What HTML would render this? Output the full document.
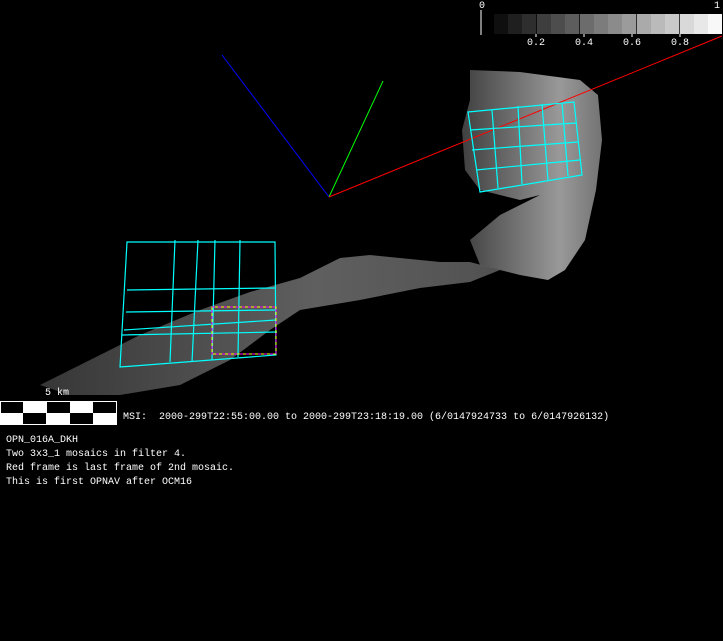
<!DOCTYPE html><html><head><style>
body{margin:0;background:#000;width:723px;height:641px;overflow:hidden;position:relative;font-family:"Liberation Mono",monospace;color:#fff;font-size:10px}
.t{position:absolute;white-space:pre;line-height:14px}
</style></head><body>
<svg width="723" height="641" style="position:absolute;left:0;top:0">
<defs><linearGradient id="g" x1="0" x2="1"><stop offset="0" stop-color="#444"/><stop offset=".6" stop-color="#777"/><stop offset="1" stop-color="#666"/></linearGradient>
<linearGradient id="g2" x1="0" x2="1"><stop offset="0" stop-color="#555"/><stop offset=".7" stop-color="#ccc"/><stop offset="1" stop-color="#999"/></linearGradient></defs>
<g>
<rect x="494" y="14" width="14.3" height="20" fill="#0f0f0f"/><rect x="508" y="14" width="14.3" height="20" fill="#1f1f1f"/><rect x="522" y="14" width="14.3" height="20" fill="#2e2e2e"/><rect x="537" y="14" width="14.3" height="20" fill="#3e3e3e"/><rect x="551" y="14" width="14.3" height="20" fill="#4d4d4d"/><rect x="565" y="14" width="14.3" height="20" fill="#5d5d5d"/><rect x="580" y="14" width="14.3" height="20" fill="#6c6c6c"/><rect x="594" y="14" width="14.3" height="20" fill="#7c7c7c"/><rect x="608" y="14" width="14.3" height="20" fill="#8b8b8b"/><rect x="622" y="14" width="14.3" height="20" fill="#9b9b9b"/><rect x="637" y="14" width="14.3" height="20" fill="#aaa"/><rect x="651" y="14" width="14.3" height="20" fill="#bababa"/><rect x="665" y="14" width="14.3" height="20" fill="#c9c9c9"/><rect x="680" y="14" width="14.3" height="20" fill="#d9d9d9"/><rect x="694" y="14" width="14.3" height="20" fill="#e8e8e8"/><rect x="708" y="14" width="14" height="20" fill="#f8f8f8"/>
<line x1="481" y1="10" x2="481" y2="35" stroke="#fff"/>
<line x1="536" y1="34" x2="536" y2="37" stroke="#fff"/><line x1="584" y1="34" x2="584" y2="37" stroke="#fff"/><line x1="632" y1="34" x2="632" y2="37" stroke="#fff"/><line x1="680" y1="34" x2="680" y2="37" stroke="#fff"/>
</g>
<path d="M470 70 L520 72 L580 80 L598 95 L602 140 L596 190 L585 240 L565 270 L548 280 L520 275 L480 265 L470 240 L500 215 L540 195 L520 200 L480 190 L465 170 L462 130 L470 100 Z" fill="url(#g2)" opacity=".75"/>
<path d="M40 385 L100 355 L140 335 L200 310 L250 292 L300 278 L340 258 L370 255 L400 258 L440 262 L470 262 L500 270 L470 282 L420 288 L360 300 L300 310 L270 330 L230 360 L180 385 L120 395 L70 395 Z" fill="url(#g)" opacity=".8"/>
<line x1="329" y1="197" x2="222" y2="55" stroke="#00f"/>
<line x1="329" y1="197" x2="383" y2="81" stroke="#0f0"/>
<line x1="329" y1="197" x2="722" y2="36" stroke="#f00"/>
<g stroke="#0ff" fill="none" stroke-width="1.2">
<path d="M127 242 L275 242 L276 355 L120 367 Z"/>
<path d="M127 290 L275 288 M126 312 L276 310 M124 330 L276 320 M122 335 L277 332"/>
<path d="M175 240 L170 362 M198 240 L192 362 M215 240 L212 360 M240 240 L238 357"/>
<path d="M468 112 L574 102 L582 175 L480 192 Z"/>
<path d="M470 130 L576 123 M472 150 L578 142 M476 170 L580 160"/>
<path d="M492 110 L498 188 M518 106 L522 184 M542 104 L548 180 M562 103 L568 176"/>
</g>
<rect x="212" y="307" width="64" height="47" fill="none" stroke="#ff0"/>
<rect x="212" y="307" width="64" height="47" fill="none" stroke="#f0f" stroke-dasharray="3 3"/>
<rect x="0.5" y="401.5" width="116" height="23" fill="#fff" stroke="#fff"/>
<rect x="1" y="402" width="22" height="11" fill="#000"/><rect x="47" y="402" width="23" height="11" fill="#000"/><rect x="93" y="402" width="23" height="11" fill="#000"/>
<rect x="23" y="413" width="23" height="11" fill="#000"/><rect x="70" y="413" width="23" height="11" fill="#000"/>
</svg>
<div class="t" style="left:479px;top:0px">0</div>
<div class="t" style="left:714px;top:0px">1</div>
<div class="t" style="left:527px;top:37px">0.2</div>
<div class="t" style="left:575px;top:37px">0.4</div>
<div class="t" style="left:623px;top:37px">0.6</div>
<div class="t" style="left:671px;top:37px">0.8</div>
<div class="t" style="left:45px;top:387px">5 km</div>
<div class="t" style="left:123px;top:411px">MSI:  2000-299T22:55:00.00 to 2000-299T23:18:19.00 (6/0147924733 to 6/0147926132)</div>
<div class="t" style="left:6px;top:434px">OPN_016A_DKH
Two 3x3_1 mosaics in filter 4.
Red frame is last frame of 2nd mosaic.
This is first OPNAV after OCM16</div>
</body></html>
